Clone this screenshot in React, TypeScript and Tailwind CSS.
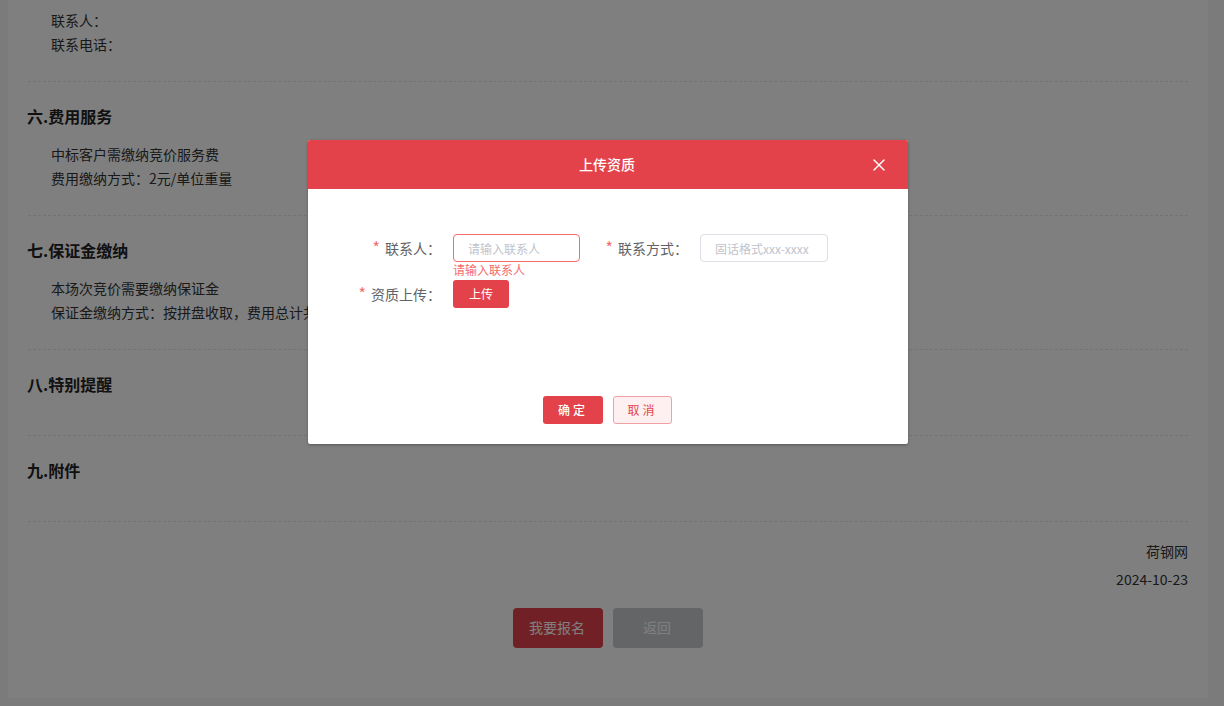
import { X } from "lucide-react";

const font = { cjk: "font-['Microsoft_YaHei','Noto_Sans_CJK_SC',sans-serif]" };

function Section({ title, lines }: { title: string; lines?: React.ReactNode[] }) {
  return (
    <section className="border-b border-dashed border-[#e6e6e6] pt-[22px] pb-[25px]">
      <h2 className="-ml-px text-[16px] leading-6 font-bold text-[#222]">{title}</h2>
      <div className="mt-[14px] pl-[23px] text-[14px] leading-6 text-[#333]">
        {lines?.map((line, i) => <p key={i}>{line}</p>)}
      </div>
    </section>
  );
}

function Label({ text, width }: { text: string; width: string }) {
  return (
    <label className={`${width} shrink-0 pr-3 text-right text-[14px] leading-[26px] text-[#606266]`}>
      <span className="mr-[5px] text-[16px] text-[#f56c6c]">*</span>
      {text}：
    </label>
  );
}

export default function App() {
  return (
    <div className={`relative h-[706px] overflow-hidden bg-[#f6f6f6] pl-2 pr-4 ${font.cjk}`}>
      <div className="h-[698px] w-[1200px] bg-white px-5">
        <section className="border-b border-dashed border-[#e6e6e6] pt-2 pb-[25px] pl-[23px] text-[14px] leading-6 text-[#333]">
          <p>联系人：</p>
          <p>联系电话：</p>
        </section>
        <Section title="六.费用服务" lines={["中标客户需缴纳竞价服务费", "费用缴纳方式：2元/单位重量"]} />
        <Section
          title="七.保证金缴纳"
          lines={["本场次竞价需要缴纳保证金", "保证金缴纳方式：按拼盘收取，费用总计共0元"]}
        />
        <Section title="八.特别提醒" />
        <Section title="九.附件" />
        <div className="pt-[15px] text-right text-[14px] leading-7 text-[#333]">
          <p>荷钢网</p>
          <p>2024-10-23</p>
        </div>
        <div className="mt-[15px] flex justify-center gap-[10px] text-[14px]">
          <button className="h-10 w-[90px] rounded bg-[#e3424b] pr-[2px] pb-[2px] text-white">我要报名</button>
          <button className="h-10 w-[90px] rounded bg-[#c8cacf] pr-[2px] pb-[2px] text-white">返回</button>
        </div>
      </div>

      {/* mask + dialog */}
      <div className="absolute inset-0 bg-black/50 pt-[140px] pl-[308px]">
        <div className="flex h-[304px] w-[600px] flex-col overflow-hidden rounded-[2px] bg-white shadow-[0_1px_3px_rgba(0,0,0,0.3)]">
          <div className="relative flex h-[49px] shrink-0 items-center justify-center bg-[#e3424b] pr-[2px] text-[14px] font-medium text-white">
            上传资质
            <X className="absolute top-[15px] right-[19px] size-[20px]" strokeWidth={1.7} />
          </div>
          <div className="pt-[45px]">
            <div className="flex">
              <Label text="联系人" width="w-[145px]" />
              <div className="relative">
                <input
                  readOnly
                  placeholder="请输入联系人"
                  className="h-7 w-[127px] rounded border border-[#f56c6c] px-[14px] text-[12px] outline-none placeholder:text-[#c0c4cc]"
                />
                <div className="absolute top-7 left-0 text-[12px] leading-4 whitespace-nowrap text-[#f56c6c]">
                  请输入联系人
                </div>
              </div>
              <Label text="联系方式" width="w-[120px]" />
              <input
                readOnly
                placeholder="固话格式xxx-xxxx"
                className="h-7 w-[128px] rounded border border-[#dcdfe6] px-[14px] text-[12px] outline-none placeholder:text-[#c0c4cc]"
              />
            </div>
            <div className="mt-[18px] flex">
              <Label text="资质上传" width="w-[145px]" />
              <button className="h-7 w-14 rounded-[3px] bg-[#e3424b] text-[12px] text-white">上传</button>
            </div>
          </div>
          <div className="mt-auto flex justify-center gap-[10px] pr-[1px] pb-5 text-[12px]">
            <button className="h-7 w-[60px] rounded-[3px] bg-[#e3424b] font-medium tracking-[3px] text-white">确定</button>
            <button className="h-7 w-[59px] rounded-[3px] border border-[#f1a1a5] bg-[#fef0f0] tracking-[3px] text-[#e3424b]">
              取消
            </button>
          </div>
        </div>
      </div>
    </div>
  );
}
